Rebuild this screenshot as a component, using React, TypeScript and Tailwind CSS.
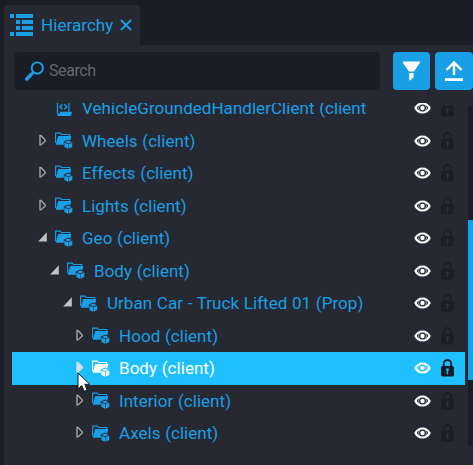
import React from 'react';

type Kind = 'script' | 'closed' | 'open';
type Row = { label: string; kind: Kind; level: number; selected?: boolean };

const rows: Row[] = [
  { label: 'VehicleGroundedHandlerClient (client)', kind: 'script', level: 0 },
  { label: 'Wheels (client)', kind: 'closed', level: 0 },
  { label: 'Effects (client)', kind: 'closed', level: 0 },
  { label: 'Lights (client)', kind: 'closed', level: 0 },
  { label: 'Geo (client)', kind: 'open', level: 0 },
  { label: 'Body (client)', kind: 'open', level: 1 },
  { label: 'Urban Car - Truck Lifted 01 (Prop)', kind: 'open', level: 2 },
  { label: 'Hood (client)', kind: 'closed', level: 3 },
  { label: 'Body (client)', kind: 'closed', level: 3, selected: true },
  { label: 'Interior (client)', kind: 'closed', level: 3 },
  { label: 'Axels (client)', kind: 'closed', level: 3 },
];

const indents = ['pl-[26px]', 'pl-[38px]', 'pl-[51px]', 'pl-[63px]'];

function Arrow({ kind, selected }: { kind: Kind; selected?: boolean }) {
  return (
    <svg width="10" height="14" viewBox="0 0 10 14" className="shrink-0">
      {kind === 'open' && <path d="M8.8 1.2v9.2H.2z" fill="#c2c2c3" />}
      {kind === 'closed' && (
        <path d="M2 1.5v9.4h1L7.2 7v-1L3 1.5z" fill={selected ? '#d6dfe3' : 'none'} stroke={selected ? '#d6dfe3' : '#a2a3a5'} strokeWidth="1.4" />
      )}
    </svg>
  );
}

function FolderIcon({ selected }: { selected?: boolean }) {
  const gap = selected ? '#1ebfff' : '#272932';
  return (
    <svg width="18" height="17" viewBox="0 0 18 17" fill="currentColor" className="shrink-0">
      <path d="M.6 11V1.1h4.6l1.3 1.4h8.2v2" fill="none" stroke="currentColor" strokeWidth="1.1" />
      <path d="M3.2 4h13.1L14.4 12.7H.7z" />
      <path d="M13.3 7.5l4.7 2v6l-4.7 2.2-4.5-2.2v-6z" fill={gap} />
      <path d="M13.3 8.4l3.5 1.5-3.5 1.4-3.5-1.4z" />
      <path d="M9.4 10.7l3.6 1.4v4.6l-3.6-1.7zM17.3 10.7l-3.7 1.4v4.6l3.7-1.7z" />
    </svg>
  );
}

function ScriptIcon() {
  return (
    <svg width="18" height="17" viewBox="0 0 18 17" fill="none" stroke="currentColor" className="shrink-0">
      <path d="M.5 1.4h2v12.2M13.9 11.8V1.4H2.5" strokeWidth="1.2" />
      <path d="M7.3 4.2L5 6.7l2.3 2.5M9.4 4.2l2.3 2.5-2.3 2.5" strokeWidth="1.4" />
      <path d="M5 11.8h11.7v1.7q0 2.5-2.1 2.5H3.8Q2 16 2 13.5h3z" fill="currentColor" stroke="none" />
    </svg>
  );
}

function Eye({ selected }: { selected?: boolean }) {
  const gap = selected ? '#1ebfff' : '#272932';
  return (
    <svg width="17" height="12" viewBox="0 0 17 12" className="shrink-0">
      <path d="M.2 6C2 2.4 4.9.4 8.5.4S15 2.4 16.8 6C15 9.6 12.1 11.6 8.5 11.6S2 9.6.2 6z" fill="#fff" />
      <path d="M2.7 6Q5 2.3 8.5 2.3T14.3 6Q12 9.7 8.5 9.7T2.7 6z" fill={gap} />
      <circle cx="8.5" cy="6" r="4" fill="#fff" />
      <circle cx="8.5" cy="6" r="3.5" fill={gap} />
      <circle cx="8.5" cy="6" r="2.2" fill="#fff" />
    </svg>
  );
}

function Lock({ selected }: { selected?: boolean }) {
  return (
    <svg width="13" height="18" viewBox="0 0 13 18" className="shrink-0">
      <path d="M2.8 8V4.7a3.7 3.7 0 0 1 7.4 0V8" fill="none" stroke={selected ? '#171b26' : '#1c1e27'} strokeWidth="1.8" />
      <rect y="7" width="13" height="10.5" rx="1.7" fill={selected ? '#171b26' : '#1c1e27'} />
      <path d="M5.2 9.5h2.6v2.3h-.6v3.5H5.8v-3.5h-.6z" fill={selected ? '#1ebfff' : '#30323a'} />
    </svg>
  );
}

function TreeRow({ row }: { row: Row }) {
  return (
    <div className={`flex h-[32.5px] shrink-0 items-center ${row.selected ? 'bg-[#1ebfff] text-white' : 'text-[#189fe5]'}`}>
      <div className={`flex w-[354px] items-center overflow-hidden ${indents[row.level]}`}>
        <Arrow kind={row.kind} selected={row.selected} />
        <span className="ml-[7px] flex shrink-0">{row.kind === 'script' ? <ScriptIcon /> : <FolderIcon selected={row.selected} />}</span>
        <span className="ml-[9px] whitespace-nowrap text-[17px] leading-6 tracking-[0.04px] [word-spacing:0.4px]">{row.label}</span>
      </div>
      <div className="ml-[48px] flex w-[17px]"><Eye selected={row.selected} /></div>
      <div className="ml-[10px] flex"><Lock selected={row.selected} /></div>
    </div>
  );
}

export default function App() {
  return (
    <div className="relative flex h-[465px] w-[473px] flex-col overflow-hidden bg-[#1a1d26] pl-1 font-['Roboto',sans-serif]">
      <div className="flex h-[45px] shrink-0 items-end">
        <div className="flex h-10 w-[136px] items-center rounded-t-[4px] bg-[#272932] pl-[6px] text-[#189fe5]">
          <svg width="23" height="23" viewBox="0 0 23 23" fill="currentColor" className="shrink-0">
            <path d="M0 0h4v4H0zM6 0h17v4H6zM6 6h4v4H6zM12 6h11v4H12zM6 12h4v4H6zM12 12h11v4H12zM0 18h4v4H0zM6 18h17v4H6z" />
          </svg>
          <span className="ml-2 w-[72px] whitespace-nowrap text-[17px] leading-6 tracking-[0.06px]">Hierarchy</span>
          <svg width="12" height="12" viewBox="0 0 12 12" stroke="currentColor" strokeWidth="1.9" className="ml-[7px] shrink-0"><path d="M1 1l10 10M11 1L1 11" /></svg>
        </div>
      </div>
      <div className="flex min-h-0 flex-1 flex-col bg-[#272932]">
        <div className="flex h-[58px] shrink-0 pl-[10px] pt-[7px]">
          <div className="flex h-[38px] w-[366px] items-center rounded-[5px] bg-[#1a1d26] pl-[11px]">
            <svg width="19" height="20" viewBox="0 0 19 20" fill="none" stroke="#189fe5"><circle cx="12.3" cy="7" r="5.6" strokeWidth="1.9" /><path d="M8.2 11.5L6.5 13.2" strokeWidth="2" /><path d="M6.7 13L1.8 18" strokeWidth="3.5" strokeLinecap="round" /></svg>
            <span className="ml-[5px] text-[16px] leading-6 tracking-[-0.4px] text-[#666870]">Search</span>
          </div>
          <div className="ml-[13px] flex h-[38px] w-[37px] items-center justify-center rounded-[4px] bg-[#189fe5]">
            <svg width="19" height="20" viewBox="0 0 19 20" fill="#fff"><path d="M.9.5h17v1.3L12 10.4H7L.9 1.8zM7.2 12h4.4v4.5l-4.4 3.2z" /></svg>
          </div>
          <div className="ml-[5px] flex h-[38px] w-[38px] shrink-0 items-center justify-center rounded-[4px] bg-[#189fe5]">
            <svg width="20" height="20" viewBox="0 0 20 20" fill="none" stroke="#fff"><path d="M10 1.5V14M2.5 9L10 1.5 17.5 9" strokeWidth="2.4" /><path d="M1 18.6h18" strokeWidth="2.8" /></svg>
          </div>
        </div>
        <div className="flex h-[343px] shrink-0">
          <div className="flex h-full w-[461px] flex-col overflow-hidden pl-2">
            <div className="-mt-[11px] flex flex-col">
              {rows.map((row, i) => <TreeRow key={i} row={row} />)}
            </div>
          </div>
          <div className="ml-[3px] mt-[3px] h-[340px] w-[5px] bg-[#1a1d26] pt-[114px]">
            <div className="h-[160px] bg-[#189fe5]" />
          </div>
        </div>
      </div>
      <svg width="14" height="21" viewBox="0 0 14 21" className="absolute left-[77px] top-[372px]">
        <path d="M1 1v16l3.8-3.5 2.5 5.8 2.9-1.2L7.8 12.3h5z" fill="#fff" stroke="#111722" strokeWidth="1" />
      </svg>
    </div>
  );
}
